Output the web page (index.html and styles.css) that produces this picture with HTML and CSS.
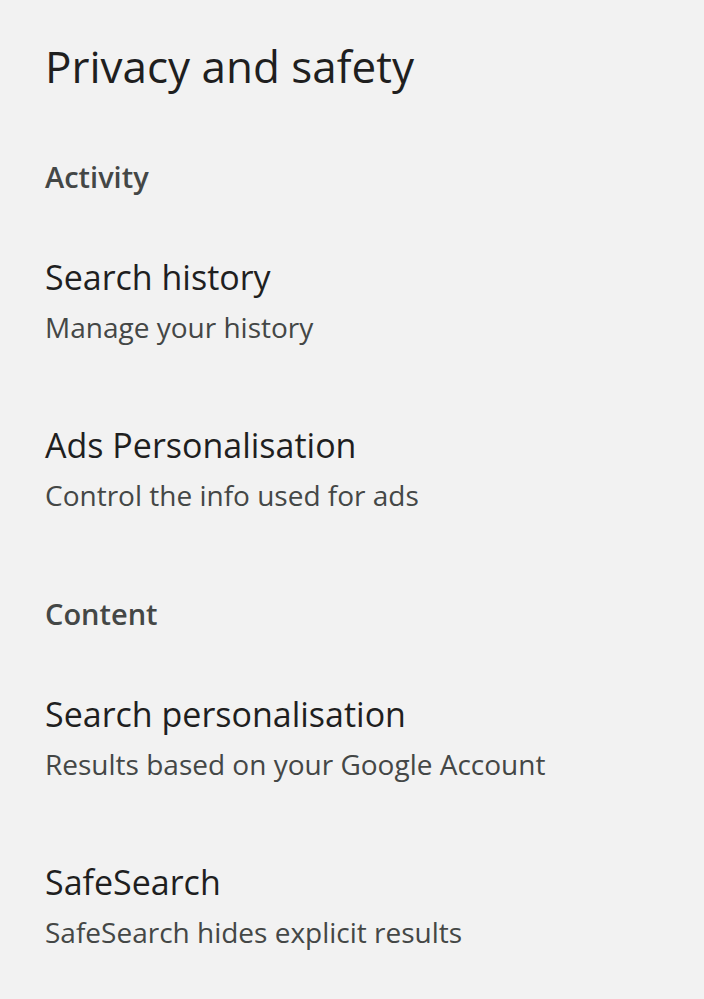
FILE: index.html
```html
<!DOCTYPE html>
<html lang="en">
<head>
  <meta charset="UTF-8">
  <title>Privacy and safety</title>
  <link rel="stylesheet" href="styles.css">
</head>
<body>
  <div class="page">
    <h1>Privacy and safety</h1>

    <section class="group">
      <h2>Activity</h2>
      <div class="item">
        <div class="item-title">Search history</div>
        <div class="item-sub">Manage your history</div>
      </div>
      <div class="item">
        <div class="item-title">Ads Personalisation</div>
        <div class="item-sub">Control the info used for ads</div>
      </div>
    </section>

    <section class="group">
      <h2>Content</h2>
      <div class="item">
        <div class="item-title">Search personalisation</div>
        <div class="item-sub">Results based on your Google Account</div>
      </div>
      <div class="item">
        <div class="item-title">SafeSearch</div>
        <div class="item-sub">SafeSearch hides explicit results</div>
      </div>
    </section>
  </div>
</body>
</html>
```

FILE: styles.css
```css
body {
  background: #f2f2f2;
  font-family: 'Open Sans', sans-serif;
  margin: 0;
  padding: 0;
}

.page {
  padding: 38px 45px 0;
}

h1 {
  font-size: 44px;
  font-weight: 400;
  line-height: 56px;
  color: #1f1f1f;
  margin: 0 0 63px;
}

h2 {
  font-size: 29px;
  font-weight: 600;
  line-height: 40px;
  color: #444746;
  margin: 0 0 58px;
}

.group {
  margin-bottom: 71px;
}

.item {
  margin-bottom: 68px;
}

.item:last-child {
  margin-bottom: 0;
}

.item-title {
  font-size: 34px;
  line-height: 44px;
  color: #1f1f1f;
}

.item-sub {
  font-size: 28px;
  line-height: 56px;
  color: #444746;
}
```
